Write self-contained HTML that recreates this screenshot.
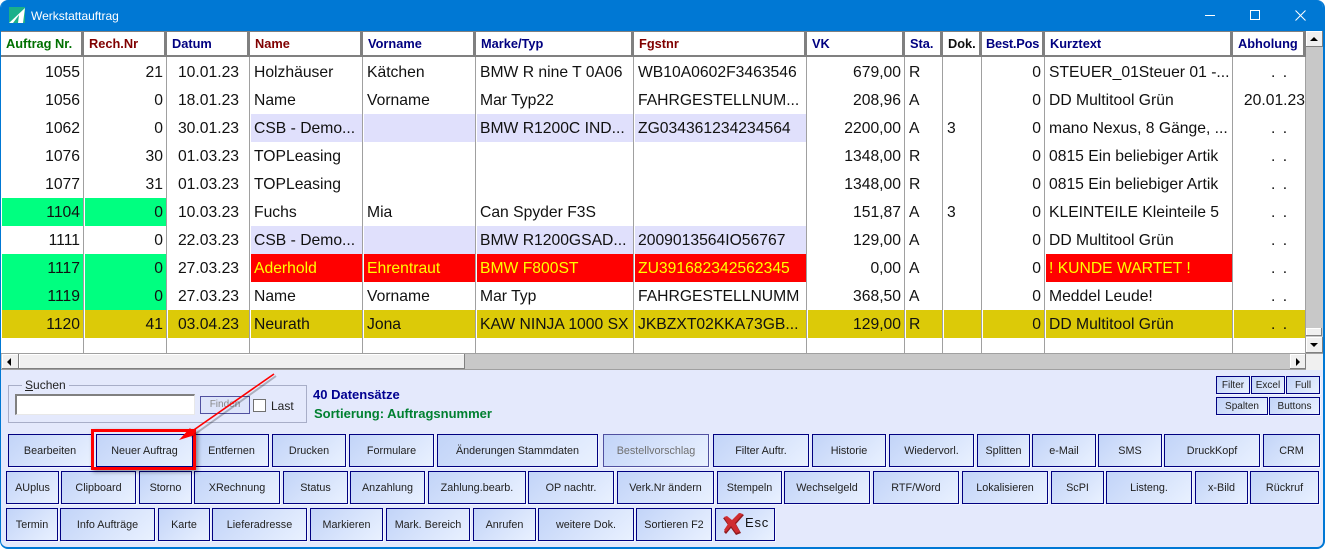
<!DOCTYPE html>
<html lang="de"><head><meta charset="utf-8"><title>Werkstattauftrag</title>
<style>
*{box-sizing:border-box}
html,body{margin:0;padding:0;width:1325px;height:549px;overflow:hidden;background:#fff}
body{position:relative;font-family:"Liberation Sans",Arial,sans-serif}
#win{position:absolute;left:0;top:0;width:1325px;height:549px;background:#e4e9fc;border:1px solid #0078d4;border-width:0 2px 2px 1px;border-radius:8px 8px 8px 8px;overflow:hidden}
#bar{position:absolute;left:-1px;top:0;width:1325px;height:32px;background:#0078d4;color:#fff;font-size:12px}
#bar span{position:absolute;left:31px;top:9px;line-height:14px}
#grid{position:absolute;left:0;top:31px;width:1306px;height:323px;background:#fff;overflow:hidden}
table{border-collapse:separate;border-spacing:0;table-layout:fixed;width:1305px;position:absolute;left:0;top:0}
th{height:26px;padding:0 0 0 5px;text-align:left;font-size:12.8px;font-weight:bold;background:#fff;border-top:1px solid #808080;border-bottom:2px solid #808080;border-right:3px solid #808080;white-space:nowrap;overflow:hidden;color:#000080}
td{height:28px;padding:2px 3px 0 3px;font-size:15.7px;color:#111;border-right:1px solid #a0a0a0;border-left:1px solid #fff;white-space:nowrap;overflow:hidden;background:#fff;line-height:26px}
tr.sp td{height:1px;line-height:0;padding:0;font-size:0}
tr.end td{height:17px}
.r{text-align:right}.c{text-align:center}
.d{padding-left:37px;word-spacing:3px}
.a{text-align:right;padding-right:0}
.g{background:#00ff80}.l{background:#e0e0fc}.y{background:#dcca08}
.x{background:#f00;color:#ff0}
.sb{position:absolute;background:#f0f0f0;box-shadow:inset -1px -1px 0 #808080,inset 1px 1px 0 #fff}
.btn{position:absolute;border:1px solid #000080;outline:0;background:linear-gradient(135deg,#c2d4f8 0%,#d4e1fb 45%,#e9f1ff 100%);font-size:10.8px;color:#222;text-align:center;line-height:33px;white-space:nowrap;box-shadow:1px 1px 0 #f2f5ff}
.h{top:434px;height:33px}.m{top:471px;height:33px}.n{top:508px;height:33px}
.btn.s{line-height:17px;font-size:10px;height:18px}
.t{position:absolute;white-space:nowrap}
</style></head><body>
<div id="win">
<div id="bar"><span>Werkstattauftrag</span>
<svg style="position:absolute;left:9px;top:7px" width="16" height="16" viewBox="0 0 16 16"><rect width="16" height="16" fill="#1bb08a"/><path d="M0 16 L16 1 L14 16 L9 16 L10 8 L4 16Z" fill="#fff"/></svg>
<svg style="position:absolute;left:1250px;top:10px" width="11" height="11" viewBox="0 0 11 11"><rect x=".5" y=".5" width="9" height="9" fill="none" stroke="#fff"/></svg>
<svg style="position:absolute;left:1295px;top:10px" width="11" height="11" viewBox="0 0 11 11"><path d="M.5.5l10 10M10.5.5l-10 10" stroke="#fff" fill="none"/></svg>
<div style="position:absolute;left:1205px;top:15px;width:10px;height:1px;background:#fff"></div>
</div>
<div id="grid"><table>
<colgroup><col style="width:83px"><col style="width:83px"><col style="width:83px"><col style="width:113px"><col style="width:113px"><col style="width:158px"><col style="width:173px"><col style="width:98px"><col style="width:38px"><col style="width:39px"><col style="width:63px"><col style="width:188px"><col style="width:73px"></colgroup>
<tr><th style="color:#007000">Auftrag Nr.</th><th style="color:#800000">Rech.Nr</th><th>Datum</th><th style="color:#800000">Name</th><th>Vorname</th><th>Marke/Typ</th><th style="color:#800000">Fgstnr</th><th>VK</th><th>Sta.</th><th style="color:#101010">Dok.</th><th style="padding-left:4px;letter-spacing:-.2px">Best.Pos</th><th>Kurztext</th><th>Abholung</th></tr>
<tr class="sp"><td></td><td></td><td></td><td></td><td></td><td></td><td></td><td></td><td></td><td></td><td></td><td></td><td></td></tr>
<tr><td class="r">1055</td><td class="r">21</td><td class="c">10.01.23</td><td>Holzhäuser</td><td>Kätchen</td><td>BMW R nine T 0A06</td><td>WB10A0602F3463546</td><td class="r">679,00</td><td>R</td><td></td><td class="r">0</td><td>STEUER_01Steuer 01 -...</td><td class="d">. .</td></tr>
<tr><td class="r">1056</td><td class="r">0</td><td class="c">18.01.23</td><td>Name</td><td>Vorname</td><td>Mar Typ22</td><td>FAHRGESTELLNUM...</td><td class="r">208,96</td><td>A</td><td></td><td class="r">0</td><td>DD Multitool Grün</td><td class="a">20.01.23</td></tr>
<tr><td class="r">1062</td><td class="r">0</td><td class="c">30.01.23</td><td class="l">CSB - Demo...</td><td class="l"></td><td class="l">BMW R1200C IND...</td><td class="l">ZG034361234234564</td><td class="r">2200,00</td><td>A</td><td>3</td><td class="r">0</td><td>mano Nexus, 8 Gänge, ...</td><td class="d">. .</td></tr>
<tr><td class="r">1076</td><td class="r">30</td><td class="c">01.03.23</td><td>TOPLeasing</td><td></td><td></td><td></td><td class="r">1348,00</td><td>R</td><td></td><td class="r">0</td><td>0815 Ein beliebiger Artik</td><td class="d">. .</td></tr>
<tr><td class="r">1077</td><td class="r">31</td><td class="c">01.03.23</td><td>TOPLeasing</td><td></td><td></td><td></td><td class="r">1348,00</td><td>R</td><td></td><td class="r">0</td><td>0815 Ein beliebiger Artik</td><td class="d">. .</td></tr>
<tr><td class="r g">1104</td><td class="r g">0</td><td class="c">10.03.23</td><td>Fuchs</td><td>Mia</td><td>Can Spyder F3S</td><td></td><td class="r">151,87</td><td>A</td><td>3</td><td class="r">0</td><td>KLEINTEILE Kleinteile 5</td><td class="d">. .</td></tr>
<tr><td class="r">1111</td><td class="r">0</td><td class="c">22.03.23</td><td class="l">CSB - Demo...</td><td class="l"></td><td class="l">BMW R1200GSAD...</td><td class="l">2009013564IO56767</td><td class="r">129,00</td><td>A</td><td></td><td class="r">0</td><td>DD Multitool Grün</td><td class="d">. .</td></tr>
<tr><td class="r g">1117</td><td class="r g">0</td><td class="c">27.03.23</td><td class="x">Aderhold</td><td class="x">Ehrentraut</td><td class="x">BMW F800ST</td><td class="x">ZU391682342562345</td><td class="r">0,00</td><td>A</td><td></td><td class="r">0</td><td class="x">! KUNDE WARTET !</td><td class="d">. .</td></tr>
<tr><td class="r g">1119</td><td class="r g">0</td><td class="c">27.03.23</td><td>Name</td><td>Vorname</td><td>Mar Typ</td><td>FAHRGESTELLNUMM</td><td class="r">368,50</td><td>A</td><td></td><td class="r">0</td><td>Meddel Leude!</td><td class="d">. .</td></tr>
<tr><td class="r y">1120</td><td class="r y">41</td><td class="c y">03.04.23</td><td class="y">Neurath</td><td class="y">Jona</td><td class="y">KAW NINJA 1000 SX</td><td class="y">JKBZXT02KKA73GB...</td><td class="r y">129,00</td><td class="y">R</td><td class="y"></td><td class="r y">0</td><td class="y">DD Multitool Grün</td><td class="d y">. .</td></tr>
<tr class="end"><td></td><td></td><td></td><td></td><td></td><td></td><td></td><td></td><td></td><td></td><td></td><td></td><td></td></tr>
</table></div>
<!-- vertical scrollbar -->
<div style="position:absolute;left:1305px;top:31px;width:17px;height:323px;background:#c8c8c8"></div>
<div class="sb" style="left:1305px;top:31px;width:17px;height:16px"></div>
<div style="position:absolute;left:1309px;top:37px;width:0;height:0;border:4px solid transparent;border-top:0;border-bottom-color:#000"></div>
<div class="sb" style="left:1305px;top:328px;width:16px;height:8px"></div>
<div class="sb" style="left:1305px;top:337px;width:17px;height:16px"></div>
<div style="position:absolute;left:1309px;top:343px;width:0;height:0;border:4px solid transparent;border-bottom:0;border-top-color:#000"></div>
<!-- horizontal scrollbar -->
<div style="position:absolute;left:0;top:353px;width:1322px;height:17px;background:#c8c8c8;border-top:1px solid #a0a0a0;border-bottom:1px solid #a0a0a0"></div>
<div class="sb" style="left:1px;top:354px;width:17px;height:15px"></div>
<div style="position:absolute;left:6px;top:358px;width:0;height:0;border:4px solid transparent;border-left:0;border-right-color:#000"></div>
<div class="sb" style="left:18px;top:354px;width:446px;height:15px"></div>
<div class="sb" style="left:1289px;top:354px;width:16px;height:15px"></div>
<div style="position:absolute;left:1295px;top:358px;width:0;height:0;border:4px solid transparent;border-right:0;border-left-color:#000"></div>
<div style="position:absolute;left:1305px;top:354px;width:17px;height:16px;background:#f0f0f0"></div>
<!-- search -->
<div style="position:absolute;left:7px;top:385px;width:299px;height:38px;border:1px solid #a8aec8"></div>
<div class="t" style="left:21px;top:378px;background:#e4e9fc;padding:0 3px;font-size:12px;line-height:14px;color:#222"><u>S</u>uchen</div>
<div style="position:absolute;left:14px;top:394px;width:180px;height:21px;background:#fff;border:1px solid #e8e8e8;border-top:2px solid #808080;border-left:2px solid #808080"></div>
<div class="btn" style="left:199px;top:396px;width:50px;height:18px;line-height:16px;font-size:10px;color:#888;border-color:#5050a0;background:#dde4fa;box-shadow:none">Finden</div>
<div style="position:absolute;left:252px;top:399px;width:13px;height:13px;background:#fff;border:1px solid #707070"></div>
<div class="t" style="left:270px;top:399px;font-size:12px;line-height:14px;color:#222">Last</div>
<div class="t" style="left:312px;top:388px;font-size:13px;line-height:14px;font-weight:bold;color:#000090">40 Datensätze</div>
<div class="t" style="left:313px;top:407px;font-size:13px;line-height:14px;font-weight:bold;color:#008030">Sortierung: Auftragsnummer</div>
<!-- small buttons -->
<div class="btn s" style="left:1215px;top:376px;width:34px">Filter</div>
<div class="btn s" style="left:1250px;top:376px;width:34px">Excel</div>
<div class="btn s" style="left:1285px;top:376px;width:34px">Full</div>
<div class="btn s" style="left:1215px;top:397px;width:52px">Spalten</div>
<div class="btn s" style="left:1268px;top:397px;width:51px">Buttons</div>
<!-- row 1 -->
<div class="btn h" style="left:7px;width:84px">Bearbeiten</div>
<div class="btn h" style="left:95px;width:97px">Neuer Auftrag</div>
<div class="btn h" style="left:193px;width:75px">Entfernen</div>
<div class="btn h" style="left:271px;width:74px">Drucken</div>
<div class="btn h" style="left:348px;width:85px">Formulare</div>
<div class="btn h" style="left:436px;width:161px">Änderungen Stammdaten</div>
<div class="btn h" style="left:602px;width:106px;color:#707070;border-color:#5050a0">Bestellvorschlag</div>
<div class="btn h" style="left:712px;width:96px">Filter Auftr.</div>
<div class="btn h" style="left:811px;width:74px">Historie</div>
<div class="btn h" style="left:888px;width:85px">Wiedervorl.</div>
<div class="btn h" style="left:976px;width:53px">Splitten</div>
<div class="btn h" style="left:1031px;width:64px">e-Mail</div>
<div class="btn h" style="left:1097px;width:64px">SMS</div>
<div class="btn h" style="left:1163px;width:96px">DruckKopf</div>
<div class="btn h" style="left:1262px;width:57px">CRM</div>
<!-- row 2 -->
<div class="btn m" style="left:5px;width:53px">AUplus</div>
<div class="btn m" style="left:60px;width:75px">Clipboard</div>
<div class="btn m" style="left:138px;width:53px">Storno</div>
<div class="btn m" style="left:193px;width:86px">XRechnung</div>
<div class="btn m" style="left:282px;width:65px">Status</div>
<div class="btn m" style="left:349px;width:75px">Anzahlung</div>
<div class="btn m" style="left:427px;width:98px">Zahlung.bearb.</div>
<div class="btn m" style="left:527px;width:86px">OP nachtr.</div>
<div class="btn m" style="left:616px;width:97px">Verk.Nr ändern</div>
<div class="btn m" style="left:716px;width:65px">Stempeln</div>
<div class="btn m" style="left:783px;width:86px">Wechselgeld</div>
<div class="btn m" style="left:872px;width:86px">RTF/Word</div>
<div class="btn m" style="left:961px;width:86px">Lokalisieren</div>
<div class="btn m" style="left:1050px;width:53px">ScPI</div>
<div class="btn m" style="left:1105px;width:86px">Listeng.</div>
<div class="btn m" style="left:1194px;width:53px">x-Bild</div>
<div class="btn m" style="left:1249px;width:69px">Rückruf</div>
<!-- row 3 -->
<div class="btn n" style="left:5px;width:52px">Termin</div>
<div class="btn n" style="left:59px;width:95px">Info Aufträge</div>
<div class="btn n" style="left:157px;width:52px">Karte</div>
<div class="btn n" style="left:211px;width:95px">Lieferadresse</div>
<div class="btn n" style="left:309px;width:73px">Markieren</div>
<div class="btn n" style="left:385px;width:84px">Mark. Bereich</div>
<div class="btn n" style="left:472px;width:63px">Anrufen</div>
<div class="btn n" style="left:537px;width:96px">weitere Dok.</div>
<div class="btn n" style="left:635px;width:76px">Sortieren F2</div>
<div class="btn n" style="left:714px;width:60px"></div>
<svg style="position:absolute;left:722px;top:512px" width="22" height="24" viewBox="0 0 22 24"><path d="M0 6 L4 5 L9 9 L17 1 L21 3 L13 12 L18 21 L13 23 L8 16 L3 22 L1 20 L5 13Z" fill="#8e1a1e"/><path d="M1 5 L4 4 L9 8 L16 1 L20 2 L12 11 L17 20 L13 21 L8 14 L3 20 L1 18 L5 12Z" fill="#cf2c30"/></svg>
<div class="t" style="left:744px;top:515px;font-size:13px;line-height:16px;letter-spacing:.8px;color:#111">Esc</div>
<!-- annotation -->
<div style="position:absolute;left:90px;top:429px;width:105px;height:41px;border:3px solid #f00;box-shadow:2px 2px 4px rgba(0,0,0,.4)"></div>
<svg style="position:absolute;left:0;top:0" width="1325" height="549"><path d="M275 376 L190 437" stroke="rgba(0,0,0,.25)" stroke-width="2" fill="none"/><path d="M273 374 L187 434" stroke="#f00" stroke-width="1.6" fill="none"/><path d="M178 440 L189 428 L194 435Z" fill="#f00"/></svg>
</div>
</body></html>
